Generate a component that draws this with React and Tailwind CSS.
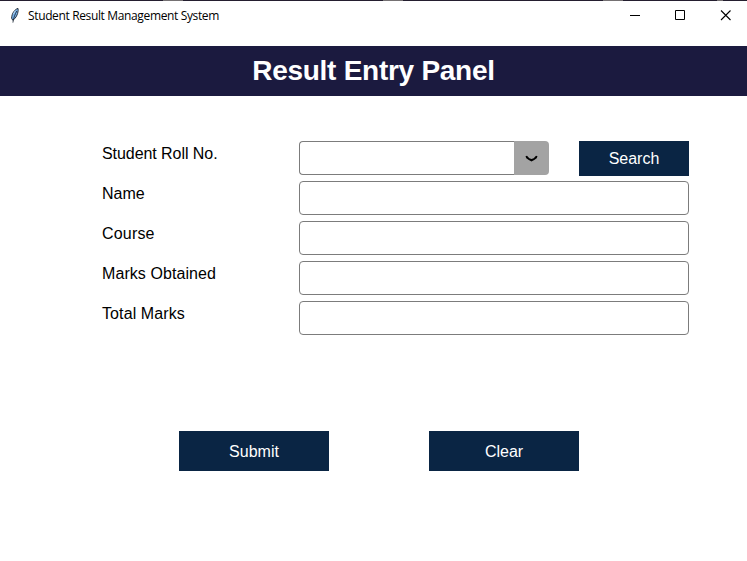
import React from "react";

const textFields = [
  { label: "Name", tracking: "" },
  { label: "Course", tracking: "tracking-[0.18px]" },
  { label: "Marks Obtained", tracking: "tracking-[0.08px]" },
  { label: "Total Marks", tracking: "tracking-[0.1px]" },
];

function TopEdge() {
  return (
    <div className="flex h-px shrink-0 bg-[#241e2f]">
      <span className="ml-[163px] w-5 bg-[#757173]" />
      <span className="ml-[200px] w-5 bg-[#757173]" />
      <span className="ml-[200px] w-5 bg-[#757173]" />
      <span className="ml-[94px] w-1.5 bg-[#757173]" />
    </div>
  );
}

function FeatherIcon() {
  return (
    <svg width="16" height="18" viewBox="0 0 16 18" aria-hidden="true">
      <path d="M11 1.4C8 2.2 4.8 6 4.6 11.2L5.8 13.3C8.8 11.4 10.9 7.4 11.2 3.5Z" fill="#78b2ea" stroke="#17202c" strokeWidth="0.9" />
      <path d="M9.8 4C8.2 7 6.7 10 5.9 15.6" fill="none" stroke="#14202f" strokeWidth="0.8" />
      <path d="M8.2 3.8L6.4 7" stroke="#c5dff7" strokeWidth="0.8" />
    </svg>
  );
}

function TitleBar() {
  return (
    <div className="flex h-[45px] shrink-0 items-start justify-between bg-white">
      <div className="flex items-center pl-[7px] pt-[5px]">
        <FeatherIcon />
        <span className="ml-[5px] whitespace-nowrap font-['Open_Sans','Noto_Sans',sans-serif] text-[12px] leading-5 tracking-[-0.36px] text-black">
          Student Result Management System
        </span>
      </div>
      <div className="flex">
        <button aria-label="Minimize" className="flex h-7 w-[42px] items-center justify-center">
          <svg width="10" height="10" viewBox="0 0 10 10"><path d="M0 5.5H10" stroke="#000" /></svg>
        </button>
        <button aria-label="Maximize" className="flex h-7 w-[48px] items-center justify-center">
          <svg width="10" height="10" viewBox="0 0 10 10"><path d="M.5.5h9v9h-9z" fill="none" stroke="#000" /></svg>
        </button>
        <button aria-label="Close" className="flex h-7 w-[43px] items-center justify-center">
          <svg width="11" height="11" viewBox="0 0 11 11"><path d="M1 .5l9.5 9.5M10.5.5L1 10" stroke="#000" strokeWidth="1.1" /></svg>
        </button>
      </div>
    </div>
  );
}

function Field({ label, tracking = "", children }) {
  return (
    <div className="flex h-10 items-start">
      <label className={`w-[197px] shrink-0 pt-px text-[16px] leading-6 text-black ${tracking}`}>{label}</label>
      {children}
    </div>
  );
}

export default function App() {
  return (
    <div className="flex h-[561px] w-[747px] flex-col overflow-hidden bg-white font-['Liberation_Sans',Arial,sans-serif]">
      <TopEdge />
      <TitleBar />
      <h1 className="flex h-[50px] shrink-0 items-center justify-center bg-[#1b1a3f] text-[28px] font-bold tracking-[-0.27px] text-white">
        Result Entry Panel
      </h1>
      <main className="pl-[102px] pr-[58px] pt-[45px]">
        <Field label="Student Roll No." tracking="tracking-[-0.06px]">
          <div className="flex h-[34px] w-[250px]">
            <input aria-label="Student Roll No." className="min-w-0 grow rounded-l-[4px] border border-r-0 border-[#7c7c7c] bg-white px-2 outline-none" />
            <button aria-label="Choose roll number" className="flex w-[35px] shrink-0 items-center justify-center rounded-r-[4px] bg-[#a3a3a3]">
              <svg width="13" height="8" viewBox="0 0 13 8" className="-ml-px mt-px">
                <path d="M0.5 1.2L2 0.8L4.3 3.2L6.5 4L8.7 3.2L11 0.8L12.5 1.2L11.7 3.2L9.2 5L6.5 6.5L3.8 5L1.3 3.2Z" fill="#000" />
              </svg>
            </button>
          </div>
          <button className="ml-[30px] h-[35px] w-[110px] bg-[#0a2544] text-[16px] text-white">Search</button>
        </Field>
        {textFields.map(({ label, tracking }) => (
          <Field key={label} label={label} tracking={tracking}>
            <input aria-label={label} className="h-[34px] w-[390px] rounded-[4px] border border-[#7c7c7c] bg-white px-2 outline-none" />
          </Field>
        ))}
        <div className="ml-[77px] mt-[90px] flex gap-[100px]">
          <button className="h-10 w-[150px] bg-[#0a2544] pt-0.5 text-[16px] text-white">Submit</button>
          <button className="h-10 w-[150px] bg-[#0a2544] pt-0.5 text-[16px] text-white">Clear</button>
        </div>
      </main>
    </div>
  );
}
